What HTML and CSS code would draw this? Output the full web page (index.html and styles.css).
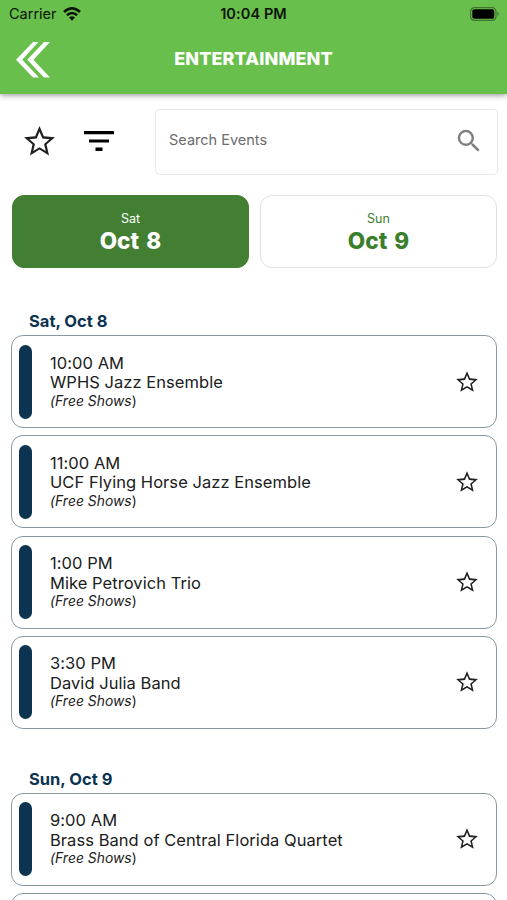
FILE: index.html
```html
<!DOCTYPE html>
<html lang="en">
<head>
<meta charset="utf-8">
<title>Entertainment</title>
<link rel="stylesheet" href="styles.css">
</head>
<body>
<svg class="defs" width="0" height="0"><defs>
<symbol id="star" viewBox="0 0 24 24"><path d="M22 9.24l-7.19-.62L12 2 9.19 8.63 2 9.24l5.46 4.73L5.82 21 12 17.27 18.18 21l-1.63-7.03L22 9.24zM12 15.7l-4.05 2.4 1.1-4.55-3.6-3.05 4.7-.38L12 5.7l1.85 4.42 4.700.38-3.600 3.050 1.100 4.550L12 15.700z"/></symbol>
</defs></svg>
<header class="top">
  <div class="status">
    <div class="carrier"><span>Carrier</span>
      <svg class="wifi" viewBox="0 0 18 14"><path d="M1 5Q9-2.200 17 5M3.900 8.200Q9 3.800 14.100 8.200" fill="none" stroke="#0a1407" stroke-width="2.600"/><path d="M6 10.500Q9 8 12 10.500L9 13.800z" fill="#0a1407"/></svg>
    </div>
    <div class="clock">10:04 PM</div>
    <svg class="battery" viewBox="0 0 30 14"><rect x=".6" y=".6" width="25.400" height="12.800" rx="4" fill="none" stroke="#3f7530" stroke-width="1.200"/><rect x="2.300" y="2.300" width="22" height="9.400" rx="2"/><path d="M27.500 4.800q2.500 2.200 0 4.400z" fill="#3f7530"/></svg>
  </div>
  <div class="nav">
    <svg class="back" viewBox="0 0 34 36"><path d="M17 0h5.500L6.300 17.700 23 35.500h-6L0 17.700zM28 0h6L17.500 17.700 34 35.500h-6L11.200 17.700z" fill="#fff"/></svg>
    <h1>ENTERTAINMENT</h1>
  </div>
</header>
<main>
  <div class="tools">
    <svg class="fav"><use href="#star"/></svg>
    <svg class="filter" viewBox="0 0 30 20"><path d="M0 0h30v3.300H0zM5 8.500h20v3.100H5zM11.500 16.600h7v3.300h-7z"/></svg>
    <div class="search"><span>Search Events</span><svg viewBox="0 0 24 24"><path d="M15.500 14h-.79l-.28-.27A6.471 6.471 0 0 0 16 9.500 6.500 6.500 0 1 0 9.500 16c1.610 0 3.090-.59 4.230-1.570l.27.28v.79l5 4.990L20.490 19l-4.990-5zm-6 0C7.010 14 5 11.990 5 9.500S7.010 5 9.500 5 14 7.010 14 9.500 11.990 14 9.500 14z"/></svg></div>
  </div>
  <div class="days">
    <div class="day active"><small>Sat</small><b>Oct 8</b></div>
    <div class="day"><small>Sun</small><b>Oct 9</b></div>
  </div>
  <section>
    <h2>Sat, Oct 8</h2>
    <article class="event"><i class="bar"></i><div class="info"><div>10:00 AM</div><div>WPHS Jazz Ensemble</div><p><em>(Free Shows</em>)</p></div><svg class="star"><use href="#star"/></svg></article>
    <article class="event"><i class="bar"></i><div class="info"><div>11:00 AM</div><div>UCF Flying Horse Jazz Ensemble</div><p><em>(Free Shows</em>)</p></div><svg class="star"><use href="#star"/></svg></article>
    <article class="event"><i class="bar"></i><div class="info"><div>1:00 PM</div><div>Mike Petrovich Trio</div><p><em>(Free Shows</em>)</p></div><svg class="star"><use href="#star"/></svg></article>
    <article class="event"><i class="bar"></i><div class="info"><div>3:30 PM</div><div>David Julia Band</div><p><em>(Free Shows</em>)</p></div><svg class="star"><use href="#star"/></svg></article>
  </section>
  <section>
    <h2>Sun, Oct 9</h2>
    <article class="event"><i class="bar"></i><div class="info"><div>9:00 AM</div><div>Brass Band of Central Florida Quartet</div><p><em>(Free Shows</em>)</p></div><svg class="star"><use href="#star"/></svg></article>
    <article class="event"></article>
  </section>
</main>
</body>
</html>
```

FILE: styles.css
```css
* { box-sizing: border-box; }
body { margin: 0; height: 900px; overflow: hidden; background: #fff; color: #202020; font-family: Inter, sans-serif; }
.defs { display: block; height: 0; }
h1, h2, p { margin: 0; }
.top { height: 94px; background: #68bf4c; box-shadow: 0 1px 6px rgba(0,0,0,.45); }
main { height: 806px; overflow: hidden; padding-top: 14.500px; clip-path: inset(0); }
.top { position: relative; z-index: 1; }
.status { height: 27px; display: grid; grid-template-columns: 1fr auto 1fr; align-items: center; padding: 0 7px 0 9px; color: #0a1407; font-size: 14.500px; }
.carrier { display: flex; align-items: center; gap: 6px; }
.wifi { width: 18px; height: 14px; }
.clock { font-weight: 600; letter-spacing: .1px; margin-right: 2px; }
.battery { width: 30px; height: 14px; justify-self: end; }
.nav { height: 66px; display: grid; grid-template-columns: 50px 1fr 50px; align-items: center; }
.back { width: 34px; height: 36px; margin-left: 15.500px; }
h1 { color: #fff; font-size: 18px; line-height: 22px; font-weight: 800; text-align: center; letter-spacing: .12px; margin-top: -2px; }
.tools { display: flex; align-items: center; height: 66px; margin: 0 9px 0 21px; }
.fav { width: 37px; height: 37px; margin-top: -1px; }
.filter { width: 30px; height: 20px; margin: -1px 0 0 26px; }
.search { margin-left: auto; width: 343px; height: 66px; border: 1.500px solid #e8e8e8; border-radius: 5px; display: flex; align-items: center; justify-content: space-between; padding: 0 13px; color: #6c6c6c; font-size: 14.500px; }
.search span { margin-top: -5px; }
.search svg { width: 30px; height: 30px; fill: #808080; margin-top: -1px; }
.days { display: grid; grid-template-columns: 1fr 1fr; gap: 11px; margin: 20.500px 10px 0 12px; }
.day { height: 73px; border: 1px solid #e0e0e0; border-radius: 12px; display: flex; flex-direction: column; align-items: center; justify-content: center; color: #3b7f2d; }
.day small { font-size: 12.500px; line-height: 18px; }
.day b { font-size: 22.500px; line-height: 26px; font-weight: 800; letter-spacing: .1px; word-spacing: 2px; }
.active { background: #437f33; border-color: #437f33; color: #fff; }
section { padding: 0 10px 0 11px; margin-top: 42px; }
section + section { margin-top: 39px; }
h2 { color: #0c3350; font-size: 16.500px; line-height: 22px; font-weight: 700; margin: 0 0 3.200px 18px; }
.event { height: 93px; margin-bottom: 7.200px; border: 1px solid #8798a3; border-radius: 12px; display: flex; align-items: center; padding: 0 16px 0 7px; }
.bar { width: 13px; height: 74px; border-radius: 6.500px; background: #0c3350; }
.info { flex: 1; margin-left: 18px; font-size: 16.500px; line-height: 19.500px; letter-spacing: .05px; }
.info p { font-size: 13.800px; line-height: 17px; }
.star { width: 26px; height: 26px; }
.fav, .star { fill: #202020; }
```
